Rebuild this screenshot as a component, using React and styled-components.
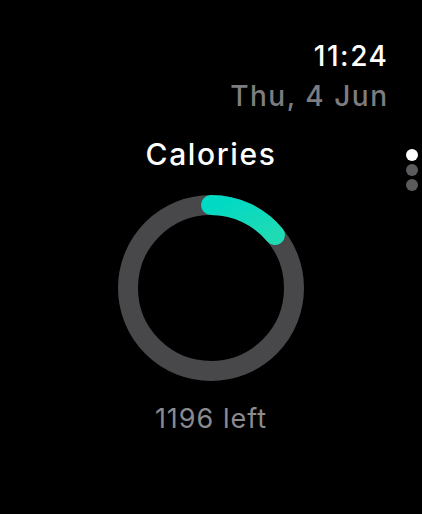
import React from 'react'
import styled, { createGlobalStyle } from 'styled-components'

const GlobalStyle = createGlobalStyle`
  html, body {
    margin: 0;
    padding: 0;
    background: #000;
  }
  body {
    font-family: Inter, "Noto Sans", sans-serif;
    -webkit-font-smoothing: antialiased;
  }
`

const Screen = styled.div`
  position: relative;
  width: 422px;
  height: 514px;
  background: #000;
  display: flex;
  flex-direction: column;
  overflow: hidden;
`

const Header = styled.header`
  display: flex;
  flex-direction: column;
  align-items: flex-end;
  padding: 40px 35px 0 0;
`

const Time = styled.div`
  color: #fff;
  font-size: 28px;
  font-weight: 500;
  line-height: 32px;
  letter-spacing: 1.6px;
  margin-right: -1.6px;
`

const DateLine = styled.div`
  color: #7d7d80;
  font-size: 28px;
  font-weight: 500;
  line-height: 32px;
  letter-spacing: 1.5px;
  margin-top: 8px;
  margin-right: -1.5px;
`

const Main = styled.main`
  display: flex;
  flex-direction: column;
  align-items: center;
  margin-top: 24px;
`

const Title = styled.h1`
  margin: 0;
  color: #fff;
  font-size: 30px;
  font-weight: 500;
  line-height: 36px;
  letter-spacing: 1.6px;
`

const RingWrap = styled.div`
  margin-top: 23px;
  width: 186px;
  height: 186px;
`

const Caption = styled.div`
  margin-top: 23px;
  color: #8b8b8f;
  font-size: 27px;
  font-weight: 400;
  line-height: 30px;
  letter-spacing: 1px;
`

const PageDots = styled.div`
  position: absolute;
  right: 4px;
  top: 149px;
  display: flex;
  flex-direction: column;
  gap: 3px;
`

const Dot = styled.span`
  width: 12px;
  height: 12px;
  border-radius: 50%;
  background: ${p => (p.$active ? '#fff' : '#5b5b5e')};
`

function Ring({ progress }) {
  const size = 186
  const stroke = 20
  const r = (size - stroke) / 2
  const c = size / 2
  const angle = progress * 2 * Math.PI
  const ex = c + r * Math.sin(angle)
  const ey = c - r * Math.cos(angle)
  const large = progress > 0.5 ? 1 : 0

  return (
    <svg width={size} height={size} viewBox={`0 0 ${size} ${size}`}>
      <defs>
        <linearGradient id="cal" x1="0" y1="0" x2="1" y2="1">
          <stop offset="0" stopColor="#00d9c4" />
          <stop offset="1" stopColor="#1fdbb4" />
        </linearGradient>
      </defs>
      <circle cx={c} cy={c} r={r} fill="none" stroke="#48484a" strokeWidth={stroke} />
      <path
        d={`M ${c} ${c - r} A ${r} ${r} 0 ${large} 1 ${ex} ${ey}`}
        fill="none"
        stroke="url(#cal)"
        strokeWidth={stroke}
        strokeLinecap="round"
      />
    </svg>
  )
}

export default function App() {
  return (
    <Screen>
      <GlobalStyle />
      <Header>
        <Time>11:24</Time>
        <DateLine>Thu, 4 Jun</DateLine>
      </Header>
      <Main>
        <Title>Calories</Title>
        <RingWrap>
          <Ring progress={0.14} />
        </RingWrap>
        <Caption>1196 left</Caption>
      </Main>
      <PageDots>
        <Dot $active />
        <Dot />
        <Dot />
      </PageDots>
    </Screen>
  )
}
